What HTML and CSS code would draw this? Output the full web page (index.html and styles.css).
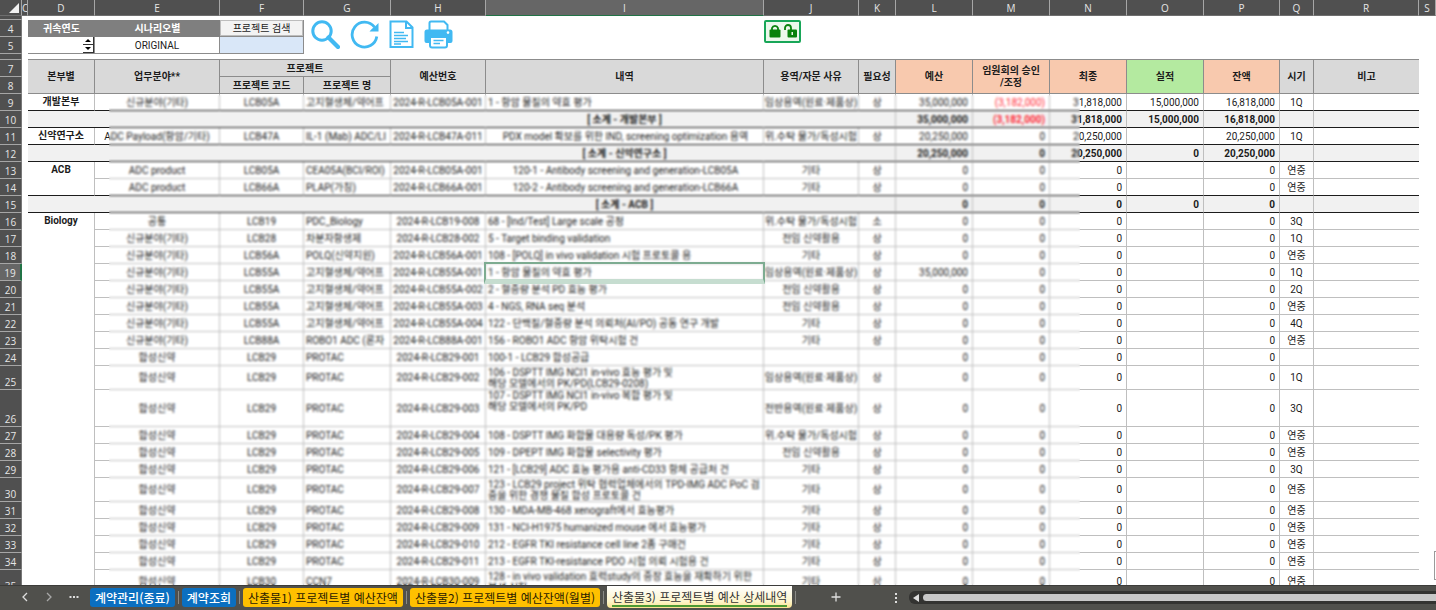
FILE: index.html
```html
<!DOCTYPE html>
<html lang="ko">
<head>
<meta charset="utf-8">
<title>프로젝트별 예산 상세내역</title>
<link rel="stylesheet" href="styles.css">
</head>
<body>
<main class="sheet">
<table class="grid">
<colgroup>
<col class="w-num"><col class="w-c"><col class="w-d"><col class="w-e"><col class="w-f"><col class="w-g"><col class="w-h"><col class="w-i"><col class="w-j"><col class="w-k"><col class="w-l"><col class="w-m"><col class="w-n"><col class="w-o"><col class="w-p"><col class="w-q"><col class="w-r"><col class="w-s">
</colgroup>
<thead>
<tr class="letters"><th class="corner"><svg width="10" height="10" viewBox="0 0 10 10"><path d="M10 0V10H0Z" fill="#f2f2f2"/></svg></th><th>C</th><th>D</th><th>E</th><th>F</th><th>G</th><th>H</th><th class="picked">I</th><th>J</th><th>K</th><th>L</th><th>M</th><th>N</th><th>O</th><th>P</th><th>Q</th><th>R</th><th>S</th></tr>
</thead>
<tbody class="tools">
<tr class="r4"><th></th><td colspan="17"></td></tr>
<tr class="r17"><th>4</th><td></td><td class="cap">귀속연도</td><td class="cap">시나리오별</td><td class="btn-cell"><button class="search-btn">프로젝트 검색</button></td>
<td colspan="2" rowspan="2" class="icons-cell"><div class="icons">
<button aria-label="검색"><svg width="29" height="29" viewBox="0 0 29 29" fill="none" stroke="#41b9f2"><circle cx="11" cy="11" r="9.2" stroke-width="3"/><path d="M17.5 17.5L27 27" stroke-width="4.2" stroke-linecap="round"/></svg></button>
<button aria-label="새로고침"><svg width="29" height="29" viewBox="0 0 29 29"><path d="M24.5 7.2A12.4 12.4 0 1 0 26.800 16.500" fill="none" stroke="#41b9f2" stroke-width="2.800"/><path d="M28.500 3V11.500H19.500L22 8.800L25.500 6Z" fill="#41b9f2"/></svg></button>
<button aria-label="문서"><svg width="25" height="29" viewBox="0 0 25 29" fill="none" stroke="#41b9f2" stroke-width="2"><path d="M1.5 1.5H17.5L23.5 7.5V27H1.5Z"/><path d="M17 2V8H23"/><path d="M5 12.5H15M5 15.5H19M5 18.5H17M5 21.5H19M5 24H12" stroke-width="1.5"/></svg></button>
<button aria-label="인쇄"><svg width="29" height="29" viewBox="0 0 29 29"><path d="M5.5 10V3Q5.500 1.500 7 1.500H20L23.500 5V10" fill="none" stroke="#41b9f2" stroke-width="2"/><path d="M3 9.500H26Q28.500 9.500 28.500 12V21Q28.500 23 26.500 23H24V16H5V23H2.500Q.5 23 .5 21V12Q.5 9.500 3 9.500Z" fill="#41b9f2"/><circle cx="24" cy="12.600" r="1.300" fill="#fff"/><path d="M6 17H23V25.500Q23 27.500 21 27.500H8Q6 27.500 6 25.500Z" fill="#fff" stroke="#41b9f2" stroke-width="2"/><path d="M9.500 20.500H19.500M9.500 23.500H16" stroke="#41b9f2" stroke-width="1.500"/></svg></button>
</div></td>
<td></td><td colspan="2" rowspan="2" class="lock-cell"><button class="locks" aria-label="잠금"><svg width="31" height="17" viewBox="0 0 31 17"><path d="M5 7V5A3.200 3.200 0 0 1 11 5V7" fill="none" stroke="#08820c" stroke-width="1.800"/><rect x="2.500" y="6.500" width="11" height="8" rx="1" fill="#08820c"/><path d="M18 7V5A3 3 0 0 1 24 5V7" fill="none" stroke="#08820c" stroke-width="1.800"/><rect x="20.500" y="6.500" width="9.500" height="8" rx="1" fill="#08820c"/><rect x="24.500" y="9" width="1.500" height="3" fill="#e9f7e9"/></svg></button></td><td colspan="8"></td></tr>
<tr class="r17"><th>5</th><td></td><td class="field"><div class="spin"><input type="text" aria-label="귀속연도"><span class="arrows"><button aria-label="위"><svg width="6" height="3" viewBox="0 0 6 3"><path d="M3 0L6 3H0Z"/></svg></button><button aria-label="아래"><svg width="6" height="3" viewBox="0 0 6 3"><path d="M3 3L6 0H0Z"/></svg></button></span></div></td><td class="field c">ORIGINAL</td><td class="btn-cell"><input class="query" type="text" aria-label="프로젝트"></td><td></td><td colspan="8"></td></tr>
<tr class="r6"><th></th><td></td><td class="rule" colspan="15"></td><td></td></tr>
</tbody>
<tbody class="heads">
<tr class="r17"><th>7</th><td class="gap"></td><td rowspan="2">본부별</td><td rowspan="2">업무분야**</td><td colspan="2">프로젝트</td><td rowspan="2">예산번호</td><td rowspan="2">내역</td><td rowspan="2">용역/자문 사유</td><td rowspan="2">필요성</td><td rowspan="2" class="peach">예산</td><td rowspan="2" class="peach two">임원회의 승인<br>/조정</td><td rowspan="2" class="peach">최종</td><td rowspan="2" class="green">실적</td><td rowspan="2" class="peach">잔액</td><td rowspan="2">시기</td><td rowspan="2" class="last">비고</td><td class="gap"></td></tr>
<tr class="r17"><th>8</th><td class="gap"></td><td>프로젝트 코드</td><td>프로젝트 명</td><td class="gap"></td></tr>
</tbody>
<tbody class="data">
<tr class="r17 end"><th>9</th><td></td><td class="dept">개발본부</td><td>신규분야(기타)</td><td>LCB05A</td><td>고지혈생체/약어프</td><td>2024-R-LCB05A-001</td><td>1 - 항암 물질의 약효 평가</td><td>임상용역(원료·제품상)</td><td>상</td><td>35,000,000</td><td class="red">(3,182,000)</td><td>31,818,000</td><td>15,000,000</td><td>16,818,000</td><td>1Q</td><td></td><td></td></tr>
<tr class="r17 end sum"><th>10</th><td></td><td colspan="5"></td><td>[ 소계 - 개발본부 ]</td><td colspan="2"></td><td>35,000,000</td><td class="red">(3,182,000)</td><td>31,818,000</td><td>15,000,000</td><td>16,818,000</td><td></td><td></td><td></td></tr>
<tr class="r17 end"><th>11</th><td></td><td class="dept">신약연구소</td><td>ADC Payload(항암/기타)</td><td>LCB47A</td><td>IL-1 (Mab) ADC/LI</td><td>2024-R-LCB47A-011</td><td class="mid">PDX model 확보를 위한 IND, screening optimization 용역</td><td>위.수탁 물가/독성시험</td><td>상</td><td>20,250,000</td><td>0</td><td>20,250,000</td><td></td><td>20,250,000</td><td>1Q</td><td></td><td></td></tr>
<tr class="r17 end sum"><th>12</th><td></td><td colspan="5"></td><td>[ 소계 - 신약연구소 ]</td><td colspan="2"></td><td>20,250,000</td><td>0</td><td>20,250,000</td><td>0</td><td>20,250,000</td><td></td><td></td><td></td></tr>
<tr class="r17"><th>13</th><td></td><td class="dept closing" rowspan="2">ACB</td><td>ADC product</td><td>LCB05A</td><td>CEA05A(BCI/ROI)</td><td>2024-R-LCB05A-001</td><td class="mid">120-1 - Antibody screening and generation-LCB05A</td><td>기타</td><td>상</td><td>0</td><td>0</td><td>0</td><td></td><td>0</td><td>연중</td><td></td><td></td></tr>
<tr class="r17 end"><th>14</th><td></td><td>ADC product</td><td>LCB66A</td><td>PLAP(가칭)</td><td>2024-R-LCB66A-001</td><td class="mid">120-2 - Antibody screening and generation-LCB66A</td><td>기타</td><td>상</td><td>0</td><td>0</td><td>0</td><td></td><td>0</td><td>연중</td><td></td><td></td></tr>
<tr class="r17 end sum"><th>15</th><td></td><td colspan="5"></td><td>[ 소계 - ACB ]</td><td colspan="2"></td><td>0</td><td>0</td><td>0</td><td>0</td><td>0</td><td></td><td></td><td></td></tr>
<tr class="r17"><th>16</th><td></td><td class="dept" rowspan="20">Biology</td><td>공통</td><td>LCB19</td><td>PDC_Biology</td><td>2024-R-LCB19-008</td><td>68 - [Ind/Test] Large scale 공정</td><td>위.수탁 물가/독성시험</td><td>소</td><td>0</td><td>0</td><td>0</td><td></td><td>0</td><td>3Q</td><td></td><td></td></tr>
<tr class="r17"><th>17</th><td></td><td>신규분야(기타)</td><td>LCB28</td><td>차분자항생제</td><td>2024-R-LCB28-002</td><td>5 - Target binding validation</td><td>전임 신약활용</td><td>상</td><td>0</td><td>0</td><td>0</td><td></td><td>0</td><td>1Q</td><td></td><td></td></tr>
<tr class="r17"><th>18</th><td></td><td>신규분야(기타)</td><td>LCB56A</td><td>POLQ(신약지원)</td><td>2024-R-LCB56A-001</td><td>108 - [POLQ] in vivo validation 시험 프로토콜 용</td><td>기타</td><td>상</td><td>0</td><td>0</td><td>0</td><td></td><td>0</td><td>연중</td><td></td><td></td></tr>
<tr class="r17 current"><th>19</th><td></td><td>신규분야(기타)</td><td>LCB55A</td><td>고지혈생체/약어프</td><td>2024-R-LCB55A-001</td><td class="selected">1 - 항암 물질의 약효 평가</td><td>임상용역(원료·제품상)</td><td>상</td><td>35,000,000</td><td>0</td><td>0</td><td></td><td>0</td><td>1Q</td><td></td><td></td></tr>
<tr class="r17"><th>20</th><td></td><td>신규분야(기타)</td><td>LCB55A</td><td>고지혈생체/약어프</td><td>2024-R-LCB55A-002</td><td>2 - 혈중량 분석 PD 효능 평가</td><td>전임 신약활용</td><td>상</td><td>0</td><td>0</td><td>0</td><td></td><td>0</td><td>2Q</td><td></td><td></td></tr>
<tr class="r17"><th>21</th><td></td><td>신규분야(기타)</td><td>LCB55A</td><td>고지혈생체/약어프</td><td>2024-R-LCB55A-003</td><td>4 - NGS, RNA seq 분석</td><td>전임 신약활용</td><td>상</td><td>0</td><td>0</td><td>0</td><td></td><td>0</td><td>연중</td><td></td><td></td></tr>
<tr class="r17"><th>22</th><td></td><td>신규분야(기타)</td><td>LCB55A</td><td>고지혈생체/약어프</td><td>2024-R-LCB55A-004</td><td>122 - 단백질/혈중량 분석 의뢰처(AI/PO) 공동 연구 개발</td><td>기타</td><td>상</td><td>0</td><td>0</td><td>0</td><td></td><td>0</td><td>4Q</td><td></td><td></td></tr>
<tr class="r17"><th>23</th><td></td><td>신규분야(기타)</td><td>LCB88A</td><td>ROBO1 ADC (론자</td><td>2024-R-LCB88A-001</td><td>156 - ROBO1 ADC 항암 위탁시험 건</td><td>기타</td><td>상</td><td>0</td><td>0</td><td>0</td><td></td><td>0</td><td>연중</td><td></td><td></td></tr>
<tr class="r17"><th>24</th><td></td><td>합성신약</td><td>LCB29</td><td>PROTAC</td><td>2024-R-LCB29-001</td><td>100-1 - LCB29 합성공급</td><td></td><td></td><td>0</td><td>0</td><td>0</td><td></td><td>0</td><td></td><td></td><td></td></tr>
<tr class="r24"><th>25</th><td></td><td>합성신약</td><td>LCB29</td><td>PROTAC</td><td>2024-R-LCB29-002</td><td class="two">106 - DSPTT IMG NCI1 in-vivo 효능 평가 및<br>해당 모델에서의 PK/PD(LCB29-0208)</td><td>임상용역(원료·제품상)</td><td>상</td><td>0</td><td>0</td><td>0</td><td></td><td>0</td><td>1Q</td><td></td><td></td></tr>
<tr class="r37"><th>26</th><td></td><td>합성신약</td><td>LCB29</td><td>PROTAC</td><td>2024-R-LCB29-003</td><td class="two high">107 - DSPTT IMG NCI1 in-vivo 복합 평가 및<br>해당 모델에서의 PK/PD</td><td>전반용역(원료·제품상)</td><td>상</td><td>0</td><td>0</td><td>0</td><td></td><td>0</td><td>3Q</td><td></td><td></td></tr>
<tr class="r17"><th>27</th><td></td><td>합성신약</td><td>LCB29</td><td>PROTAC</td><td>2024-R-LCB29-004</td><td>108 - DSPTT IMG 화합물 대용량 독성/PK 평가</td><td>위.수탁 물가/독성시험</td><td>상</td><td>0</td><td>0</td><td>0</td><td></td><td>0</td><td>연중</td><td></td><td></td></tr>
<tr class="r17"><th>28</th><td></td><td>합성신약</td><td>LCB29</td><td>PROTAC</td><td>2024-R-LCB29-005</td><td>109 - DPEPT IMG 화합물 selectivity 평가</td><td>전임 신약활용</td><td>상</td><td>0</td><td>0</td><td>0</td><td></td><td>0</td><td>연중</td><td></td><td></td></tr>
<tr class="r17"><th>29</th><td></td><td>합성신약</td><td>LCB29</td><td>PROTAC</td><td>2024-R-LCB29-006</td><td>121 - [LCB29] ADC 효능 평가용 anti-CD33 항체 공급처 건</td><td>기타</td><td>상</td><td>0</td><td>0</td><td>0</td><td></td><td>0</td><td>3Q</td><td></td><td></td></tr>
<tr class="r24"><th>30</th><td></td><td>합성신약</td><td>LCB29</td><td>PROTAC</td><td>2024-R-LCB29-007</td><td class="two">123 - LCB29 project 위탁 협력업체에서의 TPD-IMG ADC PoC 검<br>증을 위한 경쟁 물질 합성 프로토콜 건</td><td>기타</td><td>상</td><td>0</td><td>0</td><td>0</td><td></td><td>0</td><td>연중</td><td></td><td></td></tr>
<tr class="r17"><th>31</th><td></td><td>합성신약</td><td>LCB29</td><td>PROTAC</td><td>2024-R-LCB29-008</td><td>130 - MDA-MB-468 xenograft에서 효능평가</td><td>기타</td><td>상</td><td>0</td><td>0</td><td>0</td><td></td><td>0</td><td>연중</td><td></td><td></td></tr>
<tr class="r17"><th>32</th><td></td><td>합성신약</td><td>LCB29</td><td>PROTAC</td><td>2024-R-LCB29-009</td><td>131 - NCI-H1975 humanized mouse 에서 효능평가</td><td>기타</td><td>상</td><td>0</td><td>0</td><td>0</td><td></td><td>0</td><td>연중</td><td></td><td></td></tr>
<tr class="r17"><th>33</th><td></td><td>합성신약</td><td>LCB29</td><td>PROTAC</td><td>2024-R-LCB29-010</td><td>212 - EGFR TKI resistance cell line 2종 구매건</td><td>기타</td><td>상</td><td>0</td><td>0</td><td>0</td><td></td><td>0</td><td>연중</td><td></td><td></td></tr>
<tr class="r17"><th>34</th><td></td><td>합성신약</td><td>LCB29</td><td>PROTAC</td><td>2024-R-LCB29-011</td><td>213 - EGFR TKI-resistance PDO 시험 의뢰 시험용 건</td><td>기타</td><td>상</td><td>0</td><td>0</td><td>0</td><td></td><td>0</td><td>연중</td><td></td><td></td></tr>
<tr class="r24"><th>35</th><td></td><td>합성신약</td><td>LCB30</td><td>CCN7</td><td>2024-R-LCB30-009</td><td class="two">128 - in vivo validation 효력study의 중장 효능을 재확하기 위한<br>분석 실험</td><td>기타</td><td>상</td><td>0</td><td>0</td><td>0</td><td></td><td>0</td><td>연중</td><td></td><td></td></tr>
</tbody>
</table>
<div class="veil"></div>
<div class="vthumb"></div>
</main>
<footer class="bar">
<div class="nav">
<button aria-label="이전"><svg width="8" height="10" viewBox="0 0 8 10"><path d="M6 1L2 5L6 9"/></svg></button>
<button aria-label="다음" class="dim"><svg width="8" height="10" viewBox="0 0 8 10"><path d="M2 1L6 5L2 9"/></svg></button>
<button aria-label="목록"><svg width="10" height="4" viewBox="0 0 10 4"><path d="M.5 2h2M4 2h2M7.500 2h2" stroke-width="2"/></svg></button>
</div>
<nav class="tabs">
<button class="tab blue">계약관리(종료)</button><i></i>
<button class="tab blue">계약조회</button><i></i>
<button class="tab gold">산출물1) 프로젝트별 예산잔액</button><i></i>
<button class="tab gold">산출물2) 프로젝트별 예산잔액(월별)</button><i></i>
<button class="tab active"><span>산출물3) 프로젝트별 예산 상세내역</span></button><i></i>
</nav>
<button class="add" aria-label="시트 추가"><svg width="10" height="10" viewBox="0 0 10 10"><path d="M5 .5V9.500M.5 5H9.500"/></svg></button>
<svg class="dots" width="4" height="12" viewBox="0 0 4 12"><path d="M1 1h2v2h-2zM1 5h2v2h-2zM1 9h2v2h-2z"/></svg>
<div class="hscroll"><svg width="6" height="8" viewBox="0 0 6 8"><path d="M6 0V8L0 4Z"/></svg><span></span></div>
</footer>
</body>
</html>
```
FILE: styles.css
```css
* { box-sizing: border-box; }
body {
  margin: 0;
  height: 100vh;
  display: flex;
  flex-direction: column;
  overflow: hidden;
  background: #fff;
  color: #1c1c1c;
  font-family: Roboto, "Noto Sans CJK KR", sans-serif;
  font-size: 10px;
}
button, input {
  font: inherit;
  color: inherit;
  margin: 0;
  padding: 0;
  border: 0;
  background: none;
  border-radius: 0;
}
svg { display: block; }

.sheet { flex: 1; min-height: 0; position: relative; overflow: hidden; }

.grid {
  width: 100%;
  table-layout: fixed;
  border-collapse: separate;
  border-spacing: 0;
}
.w-num { width: 22px; }
.w-c { width: 6px; }
.w-d { width: 67px; }
.w-e { width: 125px; }
.w-f { width: 84px; }
.w-g { width: 87px; }
.w-h { width: 95px; }
.w-j { width: 95px; }
.w-k { width: 37px; }
.w-l, .w-m, .w-n, .w-o { width: 77px; }
.w-p { width: 76px; }
.w-q { width: 34px; }
.w-r { width: 105px; }
.w-s { width: 17px; }

td, th {
  padding: 1px 0 0;
  line-height: 14px;
  white-space: nowrap;
  overflow: hidden;
}
.r4 > * { height: 4px; }
.r6 > * { height: 6px; }
.r17 > * { height: 17px; }
.r24 > * { height: 24px; }
.r37 > * { height: 37px; }

th {
  background: #505050;
  color: #e6e6e6;
  font-family: "Open Sans", sans-serif;
  font-weight: 400;
}
.letters th {
  height: 16px;
  padding: 0;
  line-height: 12px;
  border-right: 1px solid #a6a6a6;
  border-bottom: 1px solid #6e6e6e;
}
.letters .picked { background: #666; border-bottom-color: #217346; }
.letters .corner { padding-left: 9px; }
tbody th {
  vertical-align: bottom;
  padding: 0;
  border-right: 1px solid #777;
  border-bottom: 1px solid #a6a6a6;
}
.current th { background: #666; border-right: 2px solid #217346; }

.cap { background: #7f7f7f; color: #fff; font-weight: 700; text-align: center; }
.field { border-right: 1px solid #8c8c8c; border-bottom: 1px solid #8c8c8c; }
td.field:not(.c) { padding: 0; }
.c { text-align: center; }
td.btn-cell { padding: 0; border-right: 1px solid #8c8c8c; border-bottom: 1px solid #8c8c8c; }
.search-btn {
  display: block;
  width: 100%;
  height: 16px;
  line-height: 15px;
  background: #f3f3f3;
  border: 1px solid #bdbdbd;
}
.query { display: block; width: 100%; height: 16px; background: #d9e7f8; }
.spin { display: flex; height: 16px; }
.spin input { flex: 1; min-width: 0; }
.arrows { display: flex; flex-direction: column; width: 11px; }
.arrows button {
  flex: 1;
  display: flex;
  align-items: center;
  justify-content: center;
  border-bottom: 1px solid #333;
  border-right: 1px solid #333;
}
td.icons-cell, td.lock-cell { padding-top: 0; vertical-align: top; overflow: visible; }
.icons { display: flex; gap: 10px; padding-left: 7px; }
.locks {
  display: block;
  padding: 1px;
  border: 2px solid #18a658;
  border-radius: 2px;
  background: #ecf8ec;
}
.rule { border-bottom: 1px solid #8c8c8c; }

.heads td {
  background: #d9d9d9;
  border-right: 1px solid #8c8c8c;
  border-bottom: 1px solid #8c8c8c;
  font-weight: 700;
  text-align: center;
}
.heads .peach { background: #f8c9ae; }
.heads .green { background: #b4eaa0; }
.heads .last { border-right: 0; }
.heads .gap { background: #fff; border: 0; }
.heads .two { line-height: 12px; }

.data td {
  border-right: 1px solid #bfbfbf;
  border-bottom: 1px solid #bfbfbf;
  text-align: center;
}
.data td:nth-child(2), .data td:last-child { border: 0; }
.data td:nth-last-child(2) { border-right: 0; }
.data td:nth-last-child(-n+8):nth-last-child(n+4) { text-align: right; padding-right: 4px; }
.data td:nth-last-child(11), .data td:nth-last-child(13) { text-align: left; padding-left: 2px; }
.data td.mid { text-align: center; }
.data td.dept { vertical-align: top; font-weight: 700; text-align: center; }
.data .end td:not(:nth-child(2)):not(:last-child),
.data td.closing { border-bottom-color: #1c1c1c; }
.data .sum td { background: #f1f1f1; font-weight: 700; }
.data .sum td:nth-child(2), .data .sum td:last-child { background: #fff; }
.data .sum td:nth-child(3), .data .sum td:nth-child(4) { border-right-color: transparent; }
.data .sum td:nth-child(4) { text-align: center; }
.data td.red { color: #ff2a36; }
.data td.two { padding-top: 0; line-height: 11px; }
.data td.high { vertical-align: top; }
.data td.selected { position: relative; overflow: visible; }
.selected::after {
  content: "";
  position: absolute;
  z-index: 3;
  inset: -2px -2px -4px -2px;
  border: 2px solid #7dac91;
  border-bottom: 5px solid #c6ddd0;
}

.veil {
  position: absolute;
  z-index: 2;
  left: 109px;
  right: 356px;
  top: 95px;
  bottom: 0;
  backdrop-filter: blur(1px);
}
.vthumb {
  position: absolute;
  right: 0;
  bottom: 5px;
  width: 2px;
  height: 29px;
  border: 1px solid #9a9a9a;
  border-right: 0;
}

.bar {
  display: flex;
  align-items: flex-start;
  height: 25px;
  background: #50504c;
  border-top: 1px solid #3c3c3a;
  color: #e6e6e6;
  font-family: "Noto Sans CJK KR", sans-serif;
  font-size: 12px;
}
.nav { display: flex; align-items: center; height: 22px; gap: 16px; padding-left: 21px; width: 90px; }
.nav svg, .add svg { fill: none; stroke: #dedede; stroke-width: 1.3; }
.nav .dim svg { stroke: #a8a8a8; }
.tabs { display: flex; white-space: nowrap; }
.tabs i { width: 1px; height: 13px; margin: 5px 3px 0; background: #8a8a86; }
.tab { height: 19px; margin-top: 2px; padding: 0 5px; border-radius: 3px; line-height: 18px; }
.blue { background: #0b6fc0; color: #fff; font-weight: 500; }
.gold { background: #ffc000; color: #2b2100; }
.active {
  height: 22px;
  margin-top: 0;
  background: linear-gradient(#fff, #fdf5cb 70%, #fbe38e);
  color: #333;
  border-radius: 0 0 4px 4px;
}
.active span { display: block; height: 19px; border-bottom: 2px solid #4d9a33; }
.add { margin: 6px 0 0 32px; }
.dots { margin: 6px 0 0 53px; fill: #dedede; }
.hscroll {
  flex: 1;
  display: flex;
  align-items: center;
  gap: 4px;
  height: 13px;
  margin: 5px 0 0 11px;
  padding-left: 4px;
  border-radius: 6px 0 0 6px;
  background: #333331;
}
.hscroll svg { fill: #dedede; }
.hscroll span { flex: 1; height: 7px; border-radius: 4px 0 0 4px; background: #c8c8c8; }
```
